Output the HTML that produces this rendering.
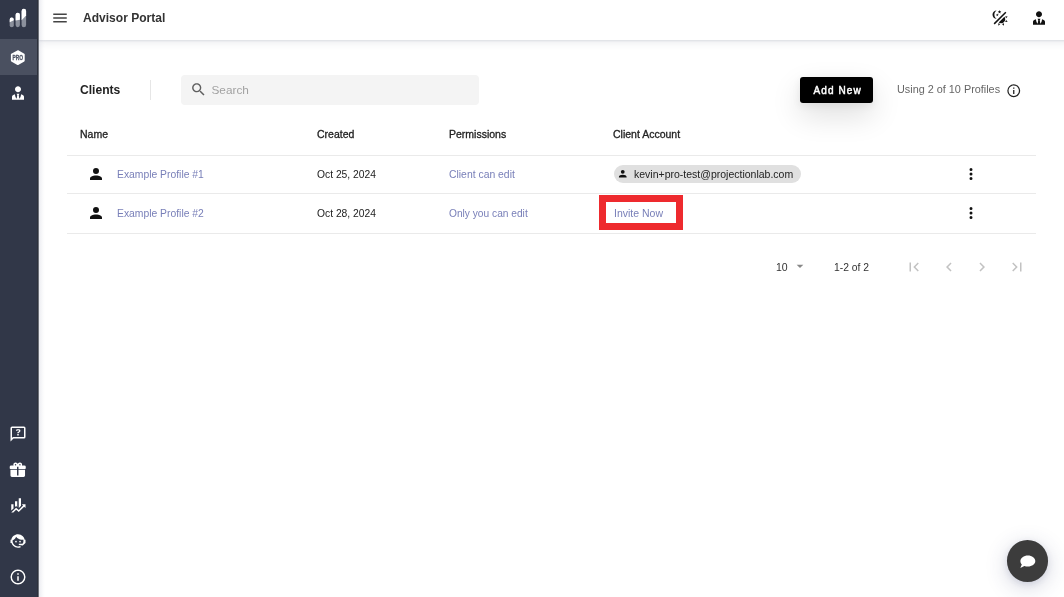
<!DOCTYPE html>
<html><head><meta charset="utf-8">
<style>
*{box-sizing:border-box;margin:0;padding:0}
body{will-change:transform}
html,body{width:1064px;height:597px;overflow:hidden;background:#fff;font-family:"Liberation Sans",sans-serif;color:#222}
.abs{position:absolute}
#side{position:absolute;left:0;top:0;width:39px;height:597px;background:#313748;z-index:2}
#side .edge{position:absolute;left:37px;top:0;width:2px;height:597px;background:linear-gradient(to right,#2d313c 50%,#6e727b 50%)}
#sshade{position:absolute;left:39px;top:0;width:6px;height:597px;background:linear-gradient(to right,rgba(40,50,100,.085),rgba(40,50,100,.05) 35%,rgba(40,50,100,.02) 65%,rgba(40,50,100,0));z-index:3}
#side .hl{position:absolute;left:0;top:39px;width:39px;height:36px;background:#4a5060}
#hdr{position:absolute;left:39px;top:0;width:1035px;height:40px;background:#fff;box-shadow:0 1px 2px rgba(40,50,80,.10),0 3px 8px rgba(40,50,90,.09)}
.t{position:absolute;white-space:nowrap;line-height:1}
.line{position:absolute;left:67px;width:969px;height:1px;background:#eaeaea}
</style></head><body>
<div id="side"><div class="hl"></div><div class="edge"></div>
<svg class="abs" style="left:0;top:0" width="39" height="597" viewBox="0 0 39 597">
 <!-- logo -->
 <g>
  <rect x="9.7" y="17.6" width="4.1" height="9.6" rx="2.05" fill="#8b909c"/>
  <rect x="15.6" y="12.7" width="4.3" height="14.5" rx="2.15" fill="#8b909c"/>
  <rect x="21.6" y="8.7" width="4.5" height="18.5" rx="2.25" fill="#8b909c"/>
  <path d="M9.7 22.2 V19.65 A2.05 2.05 0 0 1 13.8 19.4 V20.2 Z" fill="#fff"/>
  <path d="M15.6 20.6 V14.85 A2.15 2.15 0 0 1 19.9 14.85 V19.8 Z" fill="#fff"/>
  <path d="M21.6 20.2 V10.95 A2.25 2.25 0 0 1 26.1 10.95 V15.6 Z" fill="#fff"/>
 </g>
 <!-- PRO hexagon -->
 <path d="M17.8 50.2 Q18 50.1 18.3 50.3 L24.3 53.8 Q24.7 54 24.7 54.4 V60.8 Q24.7 61.2 24.3 61.4 L18.2 64.9 Q17.8 65.1 17.4 64.9 L11.3 61.4 Q10.9 61.2 10.9 60.8 V54.4 Q10.9 54 11.3 53.8 Z" fill="#fff"/>
 <text x="17.85" y="59.8" text-anchor="middle" font-family="Liberation Sans" font-weight="bold" font-size="6.6" textLength="10.6" lengthAdjust="spacingAndGlyphs" fill="#4f5565" stroke="#4f5565" stroke-width="0.3">PRO</text>
</svg>
<svg class="abs" style="left:8.8px;top:83.9px;" width="18" height="18" viewBox="0 0 24 24"><path fill="#fff" d="M12 3C14.21 3 16 4.79 16 7S14.21 11 12 11 8 9.21 8 7 9.79 3 12 3M16 13.54C16 14.6 15.72 17.07 13.81 19.83L13 15L13.94 13.12C13.32 13.05 12.67 13 12 13S10.68 13.05 10.06 13.12L11 15L10.19 19.83C8.28 17.07 8 14.6 8 13.54C5.61 14.24 4 15.5 4 17V21H20V17C20 15.5 18.4 14.24 16 13.54Z"/></svg>
<svg class="abs" style="left:8.5px;top:424.5px;" width="18" height="18" viewBox="0 0 24 24"><path fill="#fff" d="M4,2A2,2 0 0,0 2,4V22L6,18H20A2,2 0 0,0 22,16V4A2,2 0 0,0 20,2H4M4,4H20V16H5.17L4,17.17V4M12.19,5.5C11.3,5.5 10.59,5.68 10.05,6.04C9.5,6.4 9.22,7 9.27,7.69H11.24C11.24,7.41 11.34,7.2 11.5,7.06C11.7,6.92 11.92,6.85 12.19,6.85C12.5,6.85 12.77,6.93 12.95,7.11C13.13,7.28 13.22,7.5 13.22,7.8C13.22,8.08 13.14,8.33 13,8.54C12.83,8.76 12.62,8.94 12.36,9.08C11.84,9.4 11.5,9.68 11.29,9.92C11.1,10.16 11,10.5 11,11H13C13,10.72 13.05,10.5 13.14,10.32C13.23,10.15 13.4,10 13.66,9.85C14.12,9.64 14.5,9.36 14.79,9C15.08,8.63 15.23,8.24 15.23,7.8C15.23,7.1 14.96,6.54 14.42,6.12C13.88,5.71 13.13,5.5 12.19,5.5M11,12V14H13V12H11Z"/></svg>
<svg class="abs" style="left:9.1px;top:461px" width="17.5" height="17.5" viewBox="0 0 24 24"><path fill="#fff" d="M9.06,1.93C7.17,1.92 5.33,3.74 6.17,6H3A2,2 0 0,0 1,8V10A1,1 0 0,0 2,11H11V8H13V11H22A1,1 0 0,0 23,10V8A2,2 0 0,0 21,6H17.83C19,2.73 14.6,0.42 12.57,3.24L12,4L11.43,3.22C10.8,2.33 9.93,1.94 9.06,1.93M9,4C9.89,4 10.34,5.08 9.71,5.71C9.08,6.34 8,5.89 8,5A1,1 0 0,1 9,4M15,4C15.89,4 16.34,5.08 15.71,5.71C15.08,6.34 14,5.89 14,5A1,1 0 0,1 15,4M2,12V20A2,2 0 0,0 4,22H20A2,2 0 0,0 22,20V12H13V20H11V12H2Z"/></svg>
<svg class="abs" style="left:8.6px;top:495.8px;" width="18" height="18" viewBox="0 0 24 24"><path fill="#fff" d="M6,16.5L3,19.44V11H6M11,14.66L9.43,13.32L8,14.64V7H11M16,13L13,16V3H16M18.81,12.81L17,11H22V16L20.21,14.21L13,21.36L9.53,18.34L5.75,22H3L9.47,15.66L13,18.64"/></svg>
<svg class="abs" style="left:8.5px;top:531.6px;" width="18" height="18" viewBox="0 0 24 24"><path fill="#fff" d="M18.72,14.76C19.07,13.91 19.26,13 19.26,12C19.26,11.28 19.15,10.59 18.96,9.95C18.31,10.1 17.63,10.18 16.92,10.18C13.86,10.18 11.15,8.67 9.5,6.34C8.61,8.5 6.91,10.26 4.77,11.22C4.73,11.47 4.73,11.74 4.73,12A7.27,7.27 0 0,0 12,19.27C13.05,19.27 14.06,19.04 14.97,18.63C15.54,19.72 15.8,20.26 15.78,20.26C14.14,20.81 12.87,21.08 12,21.08C9.58,21.08 7.27,20.13 5.57,18.42C4.53,17.38 3.76,16.11 3.33,14.73H2V10.18H3.09C3.93,6.04 7.6,2.92 12,2.92C14.4,2.92 16.71,3.87 18.42,5.57C19.69,6.84 20.54,8.46 20.89,10.18H22V14.67H22V14.69L22,14.73H21.94L18.38,18L13.08,17.41V15.74H17.91L18.72,14.76M9.27,11.77C9.57,11.77 9.86,11.89 10.07,12.11C10.28,12.32 10.4,12.61 10.4,12.91C10.4,13.21 10.28,13.5 10.07,13.71C9.86,13.92 9.57,14.04 9.27,14.04C8.64,14.04 8.13,13.54 8.13,12.91C8.13,12.28 8.64,11.77 9.27,11.77M14.72,11.77C15.35,11.77 15.85,12.28 15.85,12.91C15.85,13.54 15.35,14.04 14.72,14.04C14.09,14.04 13.58,13.54 13.58,12.91A1.14,1.14 0 0,1 14.72,11.77Z"/></svg>
<svg class="abs" style="left:8.7px;top:567.5px;" width="18" height="18" viewBox="0 0 24 24"><path fill="#fff" d="M11,9H13V7H11M12,20C7.59,20 4,16.41 4,12C4,7.59 7.59,4 12,4C16.41,4 20,7.59 20,12C20,16.41 16.41,20 12,20M12,2A10,10 0 0,0 2,12A10,10 0 0,0 12,22A10,10 0 0,0 22,12A10,10 0 0,0 12,2M11,17H13V11H11V17Z"/></svg>
</div>

<div id="sshade"></div>
<div id="hdr"></div>
<!-- hamburger -->
<svg class="abs" style="left:50.55px;top:8.7px;" width="18" height="18" viewBox="0 0 24 24"><path fill="#444" d="M3,6H21V8H3V6M3,11H21V13H3V11M3,16H21V18H3V16Z"/></svg>
<div class="t" style="left:83px;top:12px;font-size:12.05px;font-weight:bold;color:#333">Advisor Portal</div>
<!-- theme icon -->
<svg class="abs" style="left:991.3px;top:9.4px;" width="18" height="18" viewBox="0 0 24 24"><path fill="#111" d="M7.5,2C5.71,3.15 4.5,5.18 4.5,7.5C4.5,9.82 5.71,11.85 7.53,13C4.46,13 2,10.54 2,7.5A5.5,5.5 0 0,1 7.5,2M19.07,3.5L20.5,4.93L4.93,20.5L3.5,19.07L19.07,3.5M12.89,5.93L11.41,5L9.97,6L10.39,4.3L9,3.24L10.75,3.12L11.33,1.47L12,3.1L13.73,3.13L12.38,4.26L12.89,5.93M9.59,9.54L8.43,8.81L7.31,9.59L7.650,8.27L6.56,7.44L7.92,7.35L8.37,6.06L8.88,7.33L10.24,7.36L9.19,8.23L9.59,9.54M19,13.5A5.5,5.5 0 0,1 13.5,19C12.28,19 11.15,18.6 10.24,17.930L17.93,10.24C18.6,11.15 19,12.28 19,13.5M14.6,20.08L17.37,18.93L17.13,22.28L14.6,20.08M18.93,17.38L20.08,14.6L22.28,17.15L18.93,17.38M20.08,12.42L18.94,9.64L22.28,9.88L20.08,12.42M9.63,18.93L12.4,20.08L9.87,22.27L9.63,18.93Z"/></svg>
<svg class="abs" style="left:1030px;top:8.65px;" width="18" height="18" viewBox="0 0 24 24"><path fill="#111" d="M12 3C14.21 3 16 4.79 16 7S14.21 11 12 11 8 9.21 8 7 9.79 3 12 3M16 13.54C16 14.6 15.72 17.07 13.81 19.83L13 15L13.94 13.12C13.32 13.05 12.67 13 12 13S10.68 13.05 10.06 13.12L11 15L10.19 19.83C8.28 17.07 8 14.6 8 13.54C5.61 14.24 4 15.5 4 17V21H20V17C20 15.5 18.4 14.24 16 13.54Z"/></svg>

<!-- toolbar -->
<div class="t" style="left:80px;top:84px;font-size:12.1px;font-weight:bold;color:#222">Clients</div>
<div class="abs" style="left:150px;top:80px;width:1px;height:20px;background:#e6e6e6"></div>
<div class="abs" style="left:181px;top:74.5px;width:297.5px;height:30px;background:#f4f4f4;border-radius:4px"></div>
<svg class="abs" style="left:189.7px;top:80.9px;" width="17" height="17" viewBox="0 0 24 24"><path fill="#5f5f5f" d="M15.5 14h-.79l-.28-.27C15.41 12.59 16 11.11 16 9.5 16 5.91 13.09 3 9.5 3S3 5.91 3 9.5 5.91 16 9.5 16c1.61 0 3.09-.59 4.23-1.57l.27.28v.79l5 4.99L20.49 19l-4.99-5zm-6 0C7.01 14 5 11.99 5 9.5S7.01 5 9.5 5 14 7.01 14 9.5 11.99 14 9.5 14z"/></svg>
<div class="t" style="left:211.5px;top:84.6px;font-size:11.8px;color:#a2a2a2">Search</div>

<div class="abs" style="left:800px;top:77px;width:73px;height:26px;background:#000;border-radius:3px;box-shadow:0 12px 30px rgba(0,0,0,.14),0 3px 8px rgba(0,0,0,.07)"></div>
<div class="t" style="left:813.5px;top:85.6px;font-size:10px;color:#fff;letter-spacing:1.1px;-webkit-text-stroke:0.45px #fff">Add New</div>
<div class="t" style="left:897px;top:84px;font-size:10.85px;color:#666">Using 2 of 10 Profiles</div>
<svg class="abs" style="left:1005.7px;top:82.7px;" width="15.5" height="15.5" viewBox="0 0 24 24"><path fill="#222" d="M11,9H13V7H11M12,20C7.59,20 4,16.41 4,12C4,7.59 7.59,4 12,4C16.41,4 20,7.59 20,12C20,16.41 16.41,20 12,20M12,2A10,10 0 0,0 2,12A10,10 0 0,0 12,22A10,10 0 0,0 22,12A10,10 0 0,0 12,2M11,17H13V11H11V17Z"/></svg>

<!-- table header -->
<div class="t" style="left:80px;top:129px;font-size:10.5px;color:#222;-webkit-text-stroke:0.3px #222">Name</div>
<div class="t" style="left:317px;top:129px;font-size:10.5px;color:#222;-webkit-text-stroke:0.3px #222">Created</div>
<div class="t" style="left:449px;top:129px;font-size:10.5px;color:#222;-webkit-text-stroke:0.3px #222">Permissions</div>
<div class="t" style="left:613px;top:129px;font-size:10.5px;color:#222;-webkit-text-stroke:0.3px #222">Client Account</div>
<div class="line" style="top:155px"></div>
<div class="line" style="top:193px"></div>
<div class="line" style="top:233px"></div>

<!-- row 1 -->
<svg class="abs" style="left:86.7px;top:165.2px;" width="18" height="18" viewBox="0 0 24 24"><path fill="#111" d="M12,4A4,4 0 0,1 16,8A4,4 0 0,1 12,12A4,4 0 0,1 8,8A4,4 0 0,1 12,4M12,14C16.42,14 20,15.79 20,18V20H4V18C4,15.79 7.58,14 12,14Z"/></svg>
<div class="t" style="left:117px;top:170px;font-size:10.35px;color:#787fb8">Example Profile #1</div>
<div class="t" style="left:317px;top:170px;font-size:10.3px;color:#222">Oct 25, 2024</div>
<div class="t" style="left:449px;top:170px;font-size:10.4px;color:#787fb8">Client can edit</div>
<div class="abs" style="left:614px;top:165px;width:187px;height:18px;background:#e0e0e0;border-radius:9px"></div>
<svg class="abs" style="left:617.2px;top:167.5px;" width="11.5" height="11.5" viewBox="0 0 24 24"><path fill="#111" d="M12,4A4,4 0 0,1 16,8A4,4 0 0,1 12,12A4,4 0 0,1 8,8A4,4 0 0,1 12,4M12,14C16.42,14 20,15.79 20,18V20H4V18C4,15.79 7.58,14 12,14Z"/></svg>
<div class="t" style="left:634px;top:169px;font-size:10.5px;color:#222">kevin+pro-test@projectionlab.com</div>
<svg class="abs" style="left:961.6px;top:165.2px;" width="18" height="18" viewBox="0 0 24 24"><path fill="#111" d="M12,16A2,2 0 0,1 14,18A2,2 0 0,1 12,20A2,2 0 0,1 10,18A2,2 0 0,1 12,16M12,10A2,2 0 0,1 14,12A2,2 0 0,1 12,14A2,2 0 0,1 10,12A2,2 0 0,1 12,10M12,4A2,2 0 0,1 14,6A2,2 0 0,1 12,8A2,2 0 0,1 10,6A2,2 0 0,1 12,4Z"/></svg>

<!-- row 2 -->
<svg class="abs" style="left:86.7px;top:204.2px;" width="18" height="18" viewBox="0 0 24 24"><path fill="#111" d="M12,4A4,4 0 0,1 16,8A4,4 0 0,1 12,12A4,4 0 0,1 8,8A4,4 0 0,1 12,4M12,14C16.42,14 20,15.79 20,18V20H4V18C4,15.79 7.58,14 12,14Z"/></svg>
<div class="t" style="left:117px;top:209px;font-size:10.35px;color:#787fb8">Example Profile #2</div>
<div class="t" style="left:317px;top:209px;font-size:10.3px;color:#222">Oct 28, 2024</div>
<div class="t" style="left:449px;top:209px;font-size:10.2px;color:#787fb8">Only you can edit</div>
<div class="abs" style="left:599px;top:195px;width:84px;height:35px;border:7px solid #ee2a2e"></div>
<div class="t" style="left:614px;top:208px;font-size:10.5px;color:#787fb8">Invite Now</div>
<svg class="abs" style="left:961.6px;top:204.3px;" width="18" height="18" viewBox="0 0 24 24"><path fill="#111" d="M12,16A2,2 0 0,1 14,18A2,2 0 0,1 12,20A2,2 0 0,1 10,18A2,2 0 0,1 12,16M12,10A2,2 0 0,1 14,12A2,2 0 0,1 12,14A2,2 0 0,1 10,12A2,2 0 0,1 12,10M12,4A2,2 0 0,1 14,6A2,2 0 0,1 12,8A2,2 0 0,1 10,6A2,2 0 0,1 12,4Z"/></svg>

<!-- pagination -->
<div class="t" style="left:776px;top:262px;font-size:10.5px;color:#333">10</div>
<svg class="abs" style="left:792.1px;top:258px;" width="16" height="16" viewBox="0 0 24 24"><path fill="#888" d="M7,10L12,15L17,10H7Z"/></svg>
<div class="t" style="left:834px;top:263px;font-size:10.35px;color:#333">1-2 of 2</div>
<svg class="abs" style="left:905px;top:258px" width="18" height="18" viewBox="0 0 24 24"><path fill="#c2c2c2" d="M18.41 16.59L13.82 12l4.59-4.59L17 6l-6 6 6 6zM6 6h2v12H6z"/></svg>
<svg class="abs" style="left:940px;top:258px" width="18" height="18" viewBox="0 0 24 24"><path fill="#c2c2c2" d="M15.41 7.41L14 6l-6 6 6 6 1.41-1.41L10.83 12z"/></svg>
<svg class="abs" style="left:973px;top:258px" width="18" height="18" viewBox="0 0 24 24"><path fill="#c2c2c2" d="M10 6L8.59 7.41 13.17 12l-4.58 4.59L10 18l6-6z"/></svg>
<svg class="abs" style="left:1008px;top:258px" width="18" height="18" viewBox="0 0 24 24"><path fill="#c2c2c2" d="M5.59 7.41L10.18 12l-4.59 4.59L7 18l6-6-6-6zM16 6h2v12h-2z"/></svg>

<!-- chat fab -->
<div class="abs" style="left:1006.5px;top:540px;width:41.5px;height:41.5px;border-radius:50%;background:#3c3c3c;box-shadow:0 5px 22px rgba(50,60,110,.22),0 2px 6px rgba(50,60,110,.12)"></div>
<svg class="abs" style="left:1010px;top:545px" width="30" height="30" viewBox="1010 545 30 30">
 <path d="M1027.9 555.4 C1032 555.4 1035.3 557.9 1035.3 561 C1035.3 564.1 1032 566.5 1027.9 566.5 C1026.6 566.5 1025.4 566.3 1024.4 565.9 L1020.3 568.1 L1021.8 564.6 C1020.9 563.6 1020.4 562.4 1020.4 561 C1020.4 557.9 1023.8 555.4 1027.9 555.4 Z" fill="#fff"/>
</svg>
</body></html>
